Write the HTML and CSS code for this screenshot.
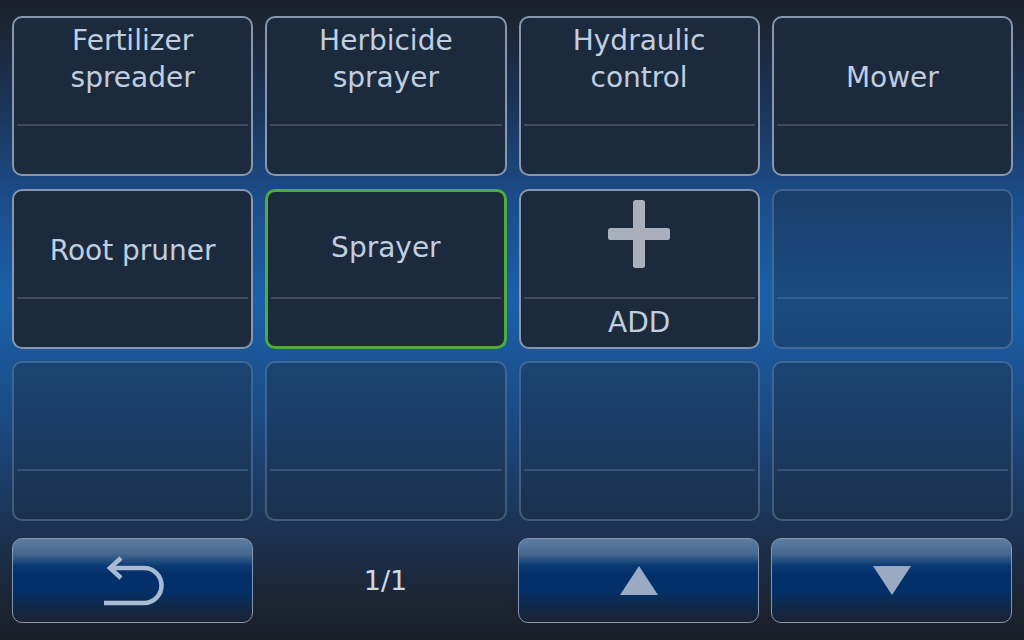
FILE: index.html
```html
<!DOCTYPE html>
<html lang="en">
<head>
<meta charset="UTF-8">
<meta name="viewport" content="width=device-width, initial-scale=1.0">
<title>Implements</title>
<link rel="stylesheet" href="styles.css">
</head>
<body>
<div class="screen">

    <!-- grid of implements -->
    <div class="tiles">
        <div class="tile">
            <div class="tile-top"><span>Fertilizer</span><span>spreader</span></div>
            <div class="tile-line"></div>
            <div class="tile-bottom"></div>
        </div>
        <div class="tile">
            <div class="tile-top"><span>Herbicide</span><span>sprayer</span></div>
            <div class="tile-line"></div>
            <div class="tile-bottom"></div>
        </div>
        <div class="tile">
            <div class="tile-top"><span>Hydraulic</span><span>control</span></div>
            <div class="tile-line"></div>
            <div class="tile-bottom"></div>
        </div>
        <div class="tile">
            <div class="tile-top"><span>Mower</span></div>
            <div class="tile-line"></div>
            <div class="tile-bottom"></div>
        </div>

        <div class="tile">
            <div class="tile-top"><span>Root pruner</span></div>
            <div class="tile-line"></div>
            <div class="tile-bottom"></div>
        </div>
        <div class="tile selected">
            <div class="tile-top"><span>Sprayer</span></div>
            <div class="tile-line"></div>
            <div class="tile-bottom"></div>
        </div>
        <div class="tile">
            <div class="tile-top add-top">
                <svg width="62" height="68" viewBox="0 0 62 68">
                    <rect x="25" y="0" width="12" height="68" rx="2.5" fill="#a9b0bb"/>
                    <rect x="0" y="28" width="62" height="12" rx="2.5" fill="#a9b0bb"/>
                </svg>
            </div>
            <div class="tile-line"></div>
            <div class="tile-bottom">ADD</div>
        </div>
        <div class="tile empty">
            <div class="tile-top"></div>
            <div class="tile-line"></div>
            <div class="tile-bottom"></div>
        </div>

        <div class="tile empty">
            <div class="tile-top"></div>
            <div class="tile-line"></div>
            <div class="tile-bottom"></div>
        </div>
        <div class="tile empty">
            <div class="tile-top"></div>
            <div class="tile-line"></div>
            <div class="tile-bottom"></div>
        </div>
        <div class="tile empty">
            <div class="tile-top"></div>
            <div class="tile-line"></div>
            <div class="tile-bottom"></div>
        </div>
        <div class="tile empty">
            <div class="tile-top"></div>
            <div class="tile-line"></div>
            <div class="tile-bottom"></div>
        </div>
    </div>

    <!-- bottom buttons -->
    <div class="toolbar">
        <button class="btn">
            <svg class="back-icon" width="62" height="50" viewBox="0 0 62 50">
                <path d="M1 47 H41 A17.5 17.5 0 0 0 41 12 H8" fill="none" stroke="#a9bbd3" stroke-width="4.5"/>
                <path d="M18 2 L7 12 L18 22" fill="none" stroke="#a9bbd3" stroke-width="4.5"/>
            </svg>
        </button>
        <div class="page">1/1</div>
        <button class="btn">
            <svg width="38" height="29" viewBox="0 0 38 29"><polygon points="19,0 38,29 0,29" fill="#9aabc3"/></svg>
        </button>
        <button class="btn">
            <svg width="38" height="29" viewBox="0 0 38 29"><polygon points="0,0 38,0 19,29" fill="#9aabc3"/></svg>
        </button>
    </div>

</div>
</body>
</html>
```

FILE: styles.css
```css
/* implement selection screen */

body {
    margin: 0;
    padding: 0;
    width: 1024px;
    height: 640px;
    overflow: hidden;
    font-family: "DejaVu Sans", Verdana, sans-serif;
    background: linear-gradient(to bottom,
        #1b2029 0px,
        #1c355a 110px,
        #1b4d8a 200px,
        #1a60ab 300px,
        #1b4a82 420px,
        #1c3252 530px,
        #1b222c 620px,
        #1a1f27 640px);
}

.screen {
    padding: 16px 11px 0 12px;
}

.tiles {
    display: grid;
    grid-template-columns: repeat(4, 1fr);
    grid-template-rows: repeat(3, 160px);
    gap: 12.5px 12px;
}

.tile {
    box-sizing: border-box;
    display: flex;
    flex-direction: column;
    background-color: #1b2a3c;
    border: 2px solid #8797ad;
    border-radius: 10px;
    color: #c0cee0;
    font-size: 28px;
}

.tile.selected {
    border: 3px solid #52aa3c;
}

.tile.empty {
    background-color: rgba(27, 42, 60, 0.38);
    border-color: rgba(140, 170, 210, 0.35);
}

.tile-top {
    box-sizing: border-box;
    height: 106px;
    padding-bottom: 28px;
    display: flex;
    flex-direction: column;
    justify-content: flex-end;
    align-items: center;
    line-height: 37px;
}

.tile.selected .tile-top {
    height: 105px;
    padding-bottom: 31px;
}

.add-top {
    justify-content: flex-start;
    padding-top: 9px;
    padding-bottom: 0;
}

.tile-line {
    height: 2px;
    margin: 0 3px;
    background-color: #3e4b5e;
}

.tile.empty .tile-line {
    background-color: rgba(110, 150, 200, 0.28);
}

.tile-bottom {
    flex: 1;
    display: flex;
    align-items: center;
    justify-content: center;
}

.toolbar {
    display: grid;
    grid-template-columns: 241px 1fr 241px 241px;
    gap: 12px;
    margin-top: 17px;
    margin-right: 1px;
    height: 85px;
}

.btn {
    box-sizing: border-box;
    display: flex;
    align-items: center;
    justify-content: center;
    padding: 0;
    border: 1.5px solid #8597b0;
    border-radius: 10px;
    background: linear-gradient(to bottom,
        #5d7ca2 0%,
        #46688f 18%,
        #0a3a74 32%,
        #03306a 42%,
        #03306a 62%,
        #0f2a4e 78%,
        #1a2232 100%);
}

.back-icon {
    margin-left: 3px;
}

.page {
    display: flex;
    align-items: center;
    justify-content: center;
    color: #d0d9e4;
    font-size: 27px;
}
```
